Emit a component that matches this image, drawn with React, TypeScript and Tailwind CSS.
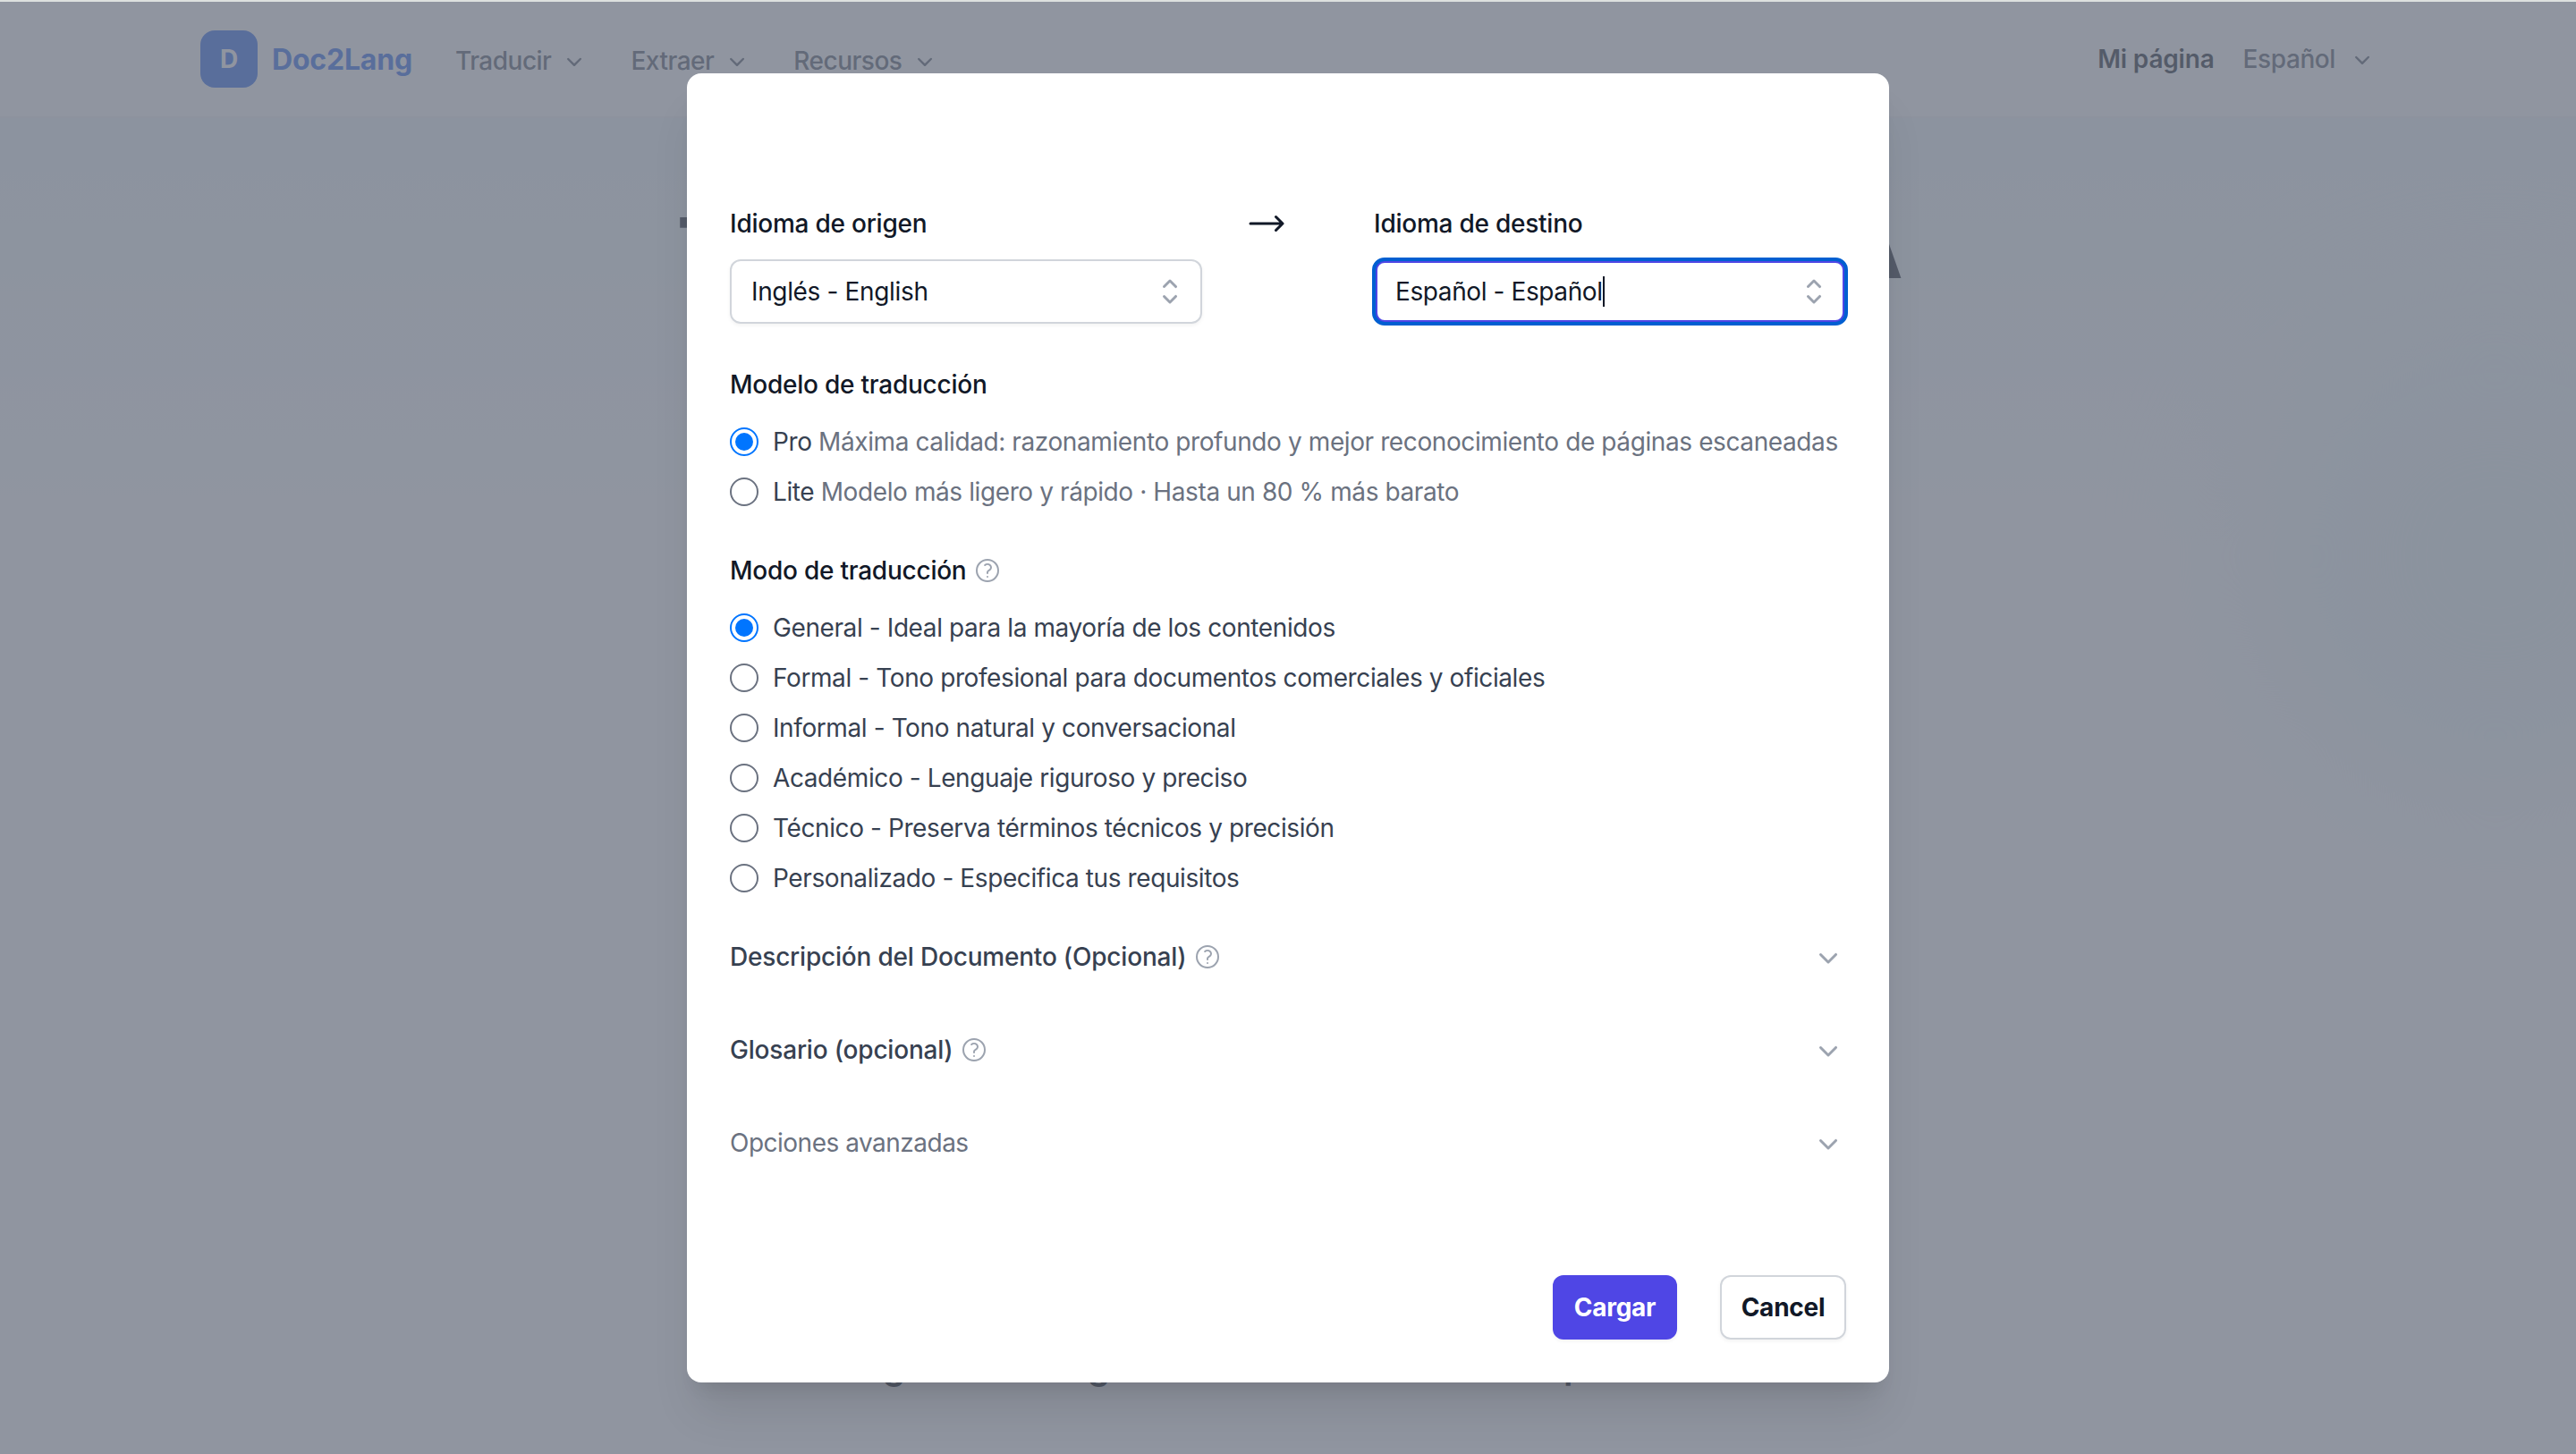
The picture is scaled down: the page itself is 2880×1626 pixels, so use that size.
import { useState } from "react";

const navItems = ["Traducir", "Extraer", "Recursos"];

const models = [
  { id: "pro", name: "Pro", detail: "Máxima calidad: razonamiento profundo y mejor reconocimiento de páginas escaneadas" },
  { id: "lite", name: "Lite", detail: "Modelo más ligero y rápido · Hasta un 80 % más barato" },
];

const modes = [
  "General - Ideal para la mayoría de los contenidos",
  "Formal - Tono profesional para documentos comerciales y oficiales",
  "Informal - Tono natural y conversacional",
  "Académico - Lenguaje riguroso y preciso",
  "Técnico - Preserva términos técnicos y precisión",
  "Personalizado - Especifica tus requisitos",
];

function ChevronDownIcon({ className }: { className: string }) {
  return (
    <svg viewBox="0 0 20 20" fill="currentColor" aria-hidden="true" className={className}>
      <path
        fillRule="evenodd"
        clipRule="evenodd"
        d="M5.22 8.22a.75.75 0 0 1 1.06 0L10 11.94l3.72-3.72a.75.75 0 1 1 1.06 1.06l-4.25 4.25a.75.75 0 0 1-1.06 0L5.22 9.28a.75.75 0 0 1 0-1.06Z"
      />
    </svg>
  );
}

function ChevronUpDownIcon() {
  return (
    <svg viewBox="0 0 20 20" fill="currentColor" aria-hidden="true" className="h-10 w-10 text-[#9ca3af]">
      <path
        fillRule="evenodd"
        clipRule="evenodd"
        d="M10.53 3.47a.75.75 0 0 0-1.06 0L6.22 6.72a.75.75 0 0 0 1.06 1.06L10 5.06l2.72 2.72a.75.75 0 1 0 1.06-1.06l-3.25-3.25Zm-4.31 9.81 3.25 3.25a.75.75 0 0 0 1.06 0l3.25-3.25a.75.75 0 1 0-1.06-1.06L10 14.94l-2.72-2.72a.75.75 0 0 0-1.06 1.06Z"
      />
    </svg>
  );
}

function HelpIcon() {
  return (
    <svg
      viewBox="0 0 24 24"
      fill="none"
      stroke="currentColor"
      strokeWidth={1.5}
      strokeLinecap="round"
      strokeLinejoin="round"
      aria-hidden="true"
      className="ml-2 h-8 w-8 text-[#9ca3af]"
    >
      <path d="M9.879 7.519c1.171-1.025 3.071-1.025 4.242 0 1.172 1.025 1.172 2.687 0 3.712-.203.179-.43.326-.67.442-.745.361-1.45.999-1.45 1.827v.75M21 12a9 9 0 11-18 0 9 9 0 0118 0zm-9 5.25h.008v.008H12v-.008z" />
    </svg>
  );
}

function ArrowIcon() {
  return (
    <svg
      viewBox="0 0 24 24"
      fill="none"
      stroke="currentColor"
      strokeWidth={1.5}
      strokeLinecap="round"
      strokeLinejoin="round"
      aria-hidden="true"
      className="ml-12 mr-auto h-12 w-12"
    >
      <path d="M17.25 8.25L21 12m0 0l-3.75 3.75M21 12H3" />
    </svg>
  );
}

function Radio({
  checked,
  onSelect,
  children,
}: {
  checked: boolean;
  onSelect: () => void;
  children: React.ReactNode;
}) {
  return (
    <button
      type="button"
      role="radio"
      aria-checked={checked}
      onClick={onSelect}
      className="flex h-10 items-center gap-4 whitespace-nowrap text-left tracking-[-0.4px] text-[#374151]"
    >
      <span
        className={`grid h-8 w-8 shrink-0 place-items-center rounded-full border-2 ${
          checked ? "border-[#0075ff]" : "border-[#6b7280]"
        }`}
      >
        {checked && <span className="h-5 w-5 rounded-full bg-[#0075ff]" />}
      </span>
      <span>{children}</span>
    </button>
  );
}

function Page() {
  return (
    <div className="flex h-full flex-col bg-white">
      <header className="flex h-[130px] shrink-0 items-center border-b-2 border-[#f3f4f6] bg-white pl-[224px] pr-[223px] text-[#4b5563]">
        <div className="flex items-center gap-4 font-bold">
          <span className="grid h-16 w-16 place-items-center rounded-2xl bg-[#2563eb] text-[28px] text-white">D</span>
          <span className="mt-0.5 text-[32px] tracking-[-0.2px] text-[#2563eb]">Doc2Lang</span>
        </div>
        <nav className="ml-[48px] mt-1 flex gap-[47px] font-medium tracking-[-0.5px]">
          {navItems.map((item) => (
            <span key={item} className="flex items-center gap-2.5">
              {item}
              <ChevronDownIcon className="h-8 w-8" />
            </span>
          ))}
        </nav>
        <div className="ml-auto flex items-center font-medium">
          <span className="font-semibold tracking-[-0.2px] text-[#111827]">Mi página</span>
          <span className="ml-8 tracking-[-0.4px]">Español</span>
          <ChevronDownIcon className="ml-3.5 h-8 w-8" />
        </div>
      </header>

      <main className="relative flex-1 overflow-hidden bg-linear-to-b from-[#eef7fa] to-white to-[480px]">
        <div className="absolute -right-[180px] top-[220px] h-[540px] w-[540px] rounded-full bg-[#ecf7f8] blur-[80px]" />
        <h1 className="mt-[85px] whitespace-nowrap text-center text-[94px] font-bold leading-[120px] tracking-[-4.4px] text-[#111827]">
          Traductor de documentos con IA
        </h1>
        <div className="mt-[1163px] flex pl-[987px] text-[40px] font-semibold leading-[56px] text-[#111827]">
          <span className="w-[229px]">g</span>
          <span className="w-[532px]">g</span>
          <span>p</span>
        </div>
      </main>
    </div>
  );
}

export default function App() {
  const [model, setModel] = useState("pro");
  const [mode, setMode] = useState(modes[0]);

  return (
    <div className="relative flex h-[1626px] w-[2880px] flex-col overflow-hidden bg-[#dde0df] pt-[2px] font-['Inter',sans-serif] text-[28px] leading-10 text-[#111827]">
      <div className="min-h-0 flex-1">
        <Page />
      </div>

      <div className="absolute inset-x-0 bottom-0 top-[2px] flex items-start justify-center bg-[#6b7280]/75 pt-20">
        <div
          role="dialog"
          className="flex h-[1464px] w-[1344px] flex-col rounded-2xl bg-white px-12 pb-12 pt-36 tracking-[-0.24px] shadow-[0_40px_50px_-10px_rgba(0,0,0,0.1),0_16px_20px_-12px_rgba(0,0,0,0.1)]"
        >
          <div className="flex items-start">
            <div className="w-[528px]">
              <p className="font-medium leading-[48px]">Idioma de origen</p>
              <div className="mt-4 flex h-[72px] items-center justify-between rounded-xl pl-6 pr-4 tracking-[-0.35px] shadow-[inset_0_0_0_2px_#d1d5db,0_2px_4px_0_rgba(0,0,0,0.05)]">
                <span>Inglés - English</span>
                <ChevronUpDownIcon />
              </div>
            </div>
            <ArrowIcon />
            <div className="w-[528px]">
              <p className="font-medium leading-[48px]">Idioma de destino</p>
              <div className="mt-4 flex h-[72px] items-center rounded-xl pl-6 pr-4 tracking-[-0.4px] shadow-[inset_0_0_0_4px_#4f46e5,0_2px_4px_0_rgba(0,0,0,0.05)] outline-4 -outline-offset-2 outline-[#005fd1]">
                <span>Español - Español</span>
                <span className="h-[34px] w-[2px] bg-[#111827]" />
                <span className="ml-auto">
                  <ChevronUpDownIcon />
                </span>
              </div>
            </div>
          </div>

          <h2 className="mt-12 font-medium">Modelo de traducción</h2>
          <div role="radiogroup" className="mt-6 flex flex-col gap-4">
            {models.map(({ id, name, detail }) => (
              <Radio key={id} checked={model === id} onSelect={() => setModel(id)}>
                {name} <span className="text-[#6b7280]">{detail}</span>
              </Radio>
            ))}
          </div>

          <h2 className="mt-12 flex items-center font-medium">
            Modo de traducción
            <HelpIcon />
          </h2>
          <div role="radiogroup" className="mt-6 flex flex-col gap-4">
            {modes.map((item) => (
              <Radio key={item} checked={mode === item} onSelect={() => setMode(item)}>
                {item}
              </Radio>
            ))}
          </div>

          <div className="mt-12 flex flex-col gap-16 tracking-[-0.2px] text-[#374151]">
            <div className="flex items-center font-medium">
              Descripción del Documento (Opcional)
              <HelpIcon />
              <ChevronDownIcon className="ml-auto h-10 w-10 text-[#9ca3af]" />
            </div>
            <div className="flex items-center font-medium">
              Glosario (opcional)
              <HelpIcon />
              <ChevronDownIcon className="ml-auto h-10 w-10 text-[#9ca3af]" />
            </div>
            <div className="flex items-center tracking-[-0.5px] text-[#6b7280]">
              Opciones avanzadas
              <ChevronDownIcon className="ml-auto h-10 w-10 text-[#9ca3af]" />
            </div>
          </div>

          <div className="mt-auto flex justify-end gap-12 font-[650]">
            <button
              type="button"
              className="h-[72px] w-[139px] rounded-xl bg-[#4f46e5] text-white shadow-[0_2px_4px_0_rgba(0,0,0,0.05)]"
            >
              Cargar
            </button>
            <button
              type="button"
              className="h-[72px] w-[141px] rounded-xl bg-white shadow-[inset_0_0_0_2px_#d1d5db,0_2px_4px_0_rgba(0,0,0,0.05)]"
            >
              Cancel
            </button>
          </div>
        </div>
      </div>
    </div>
  );
}
